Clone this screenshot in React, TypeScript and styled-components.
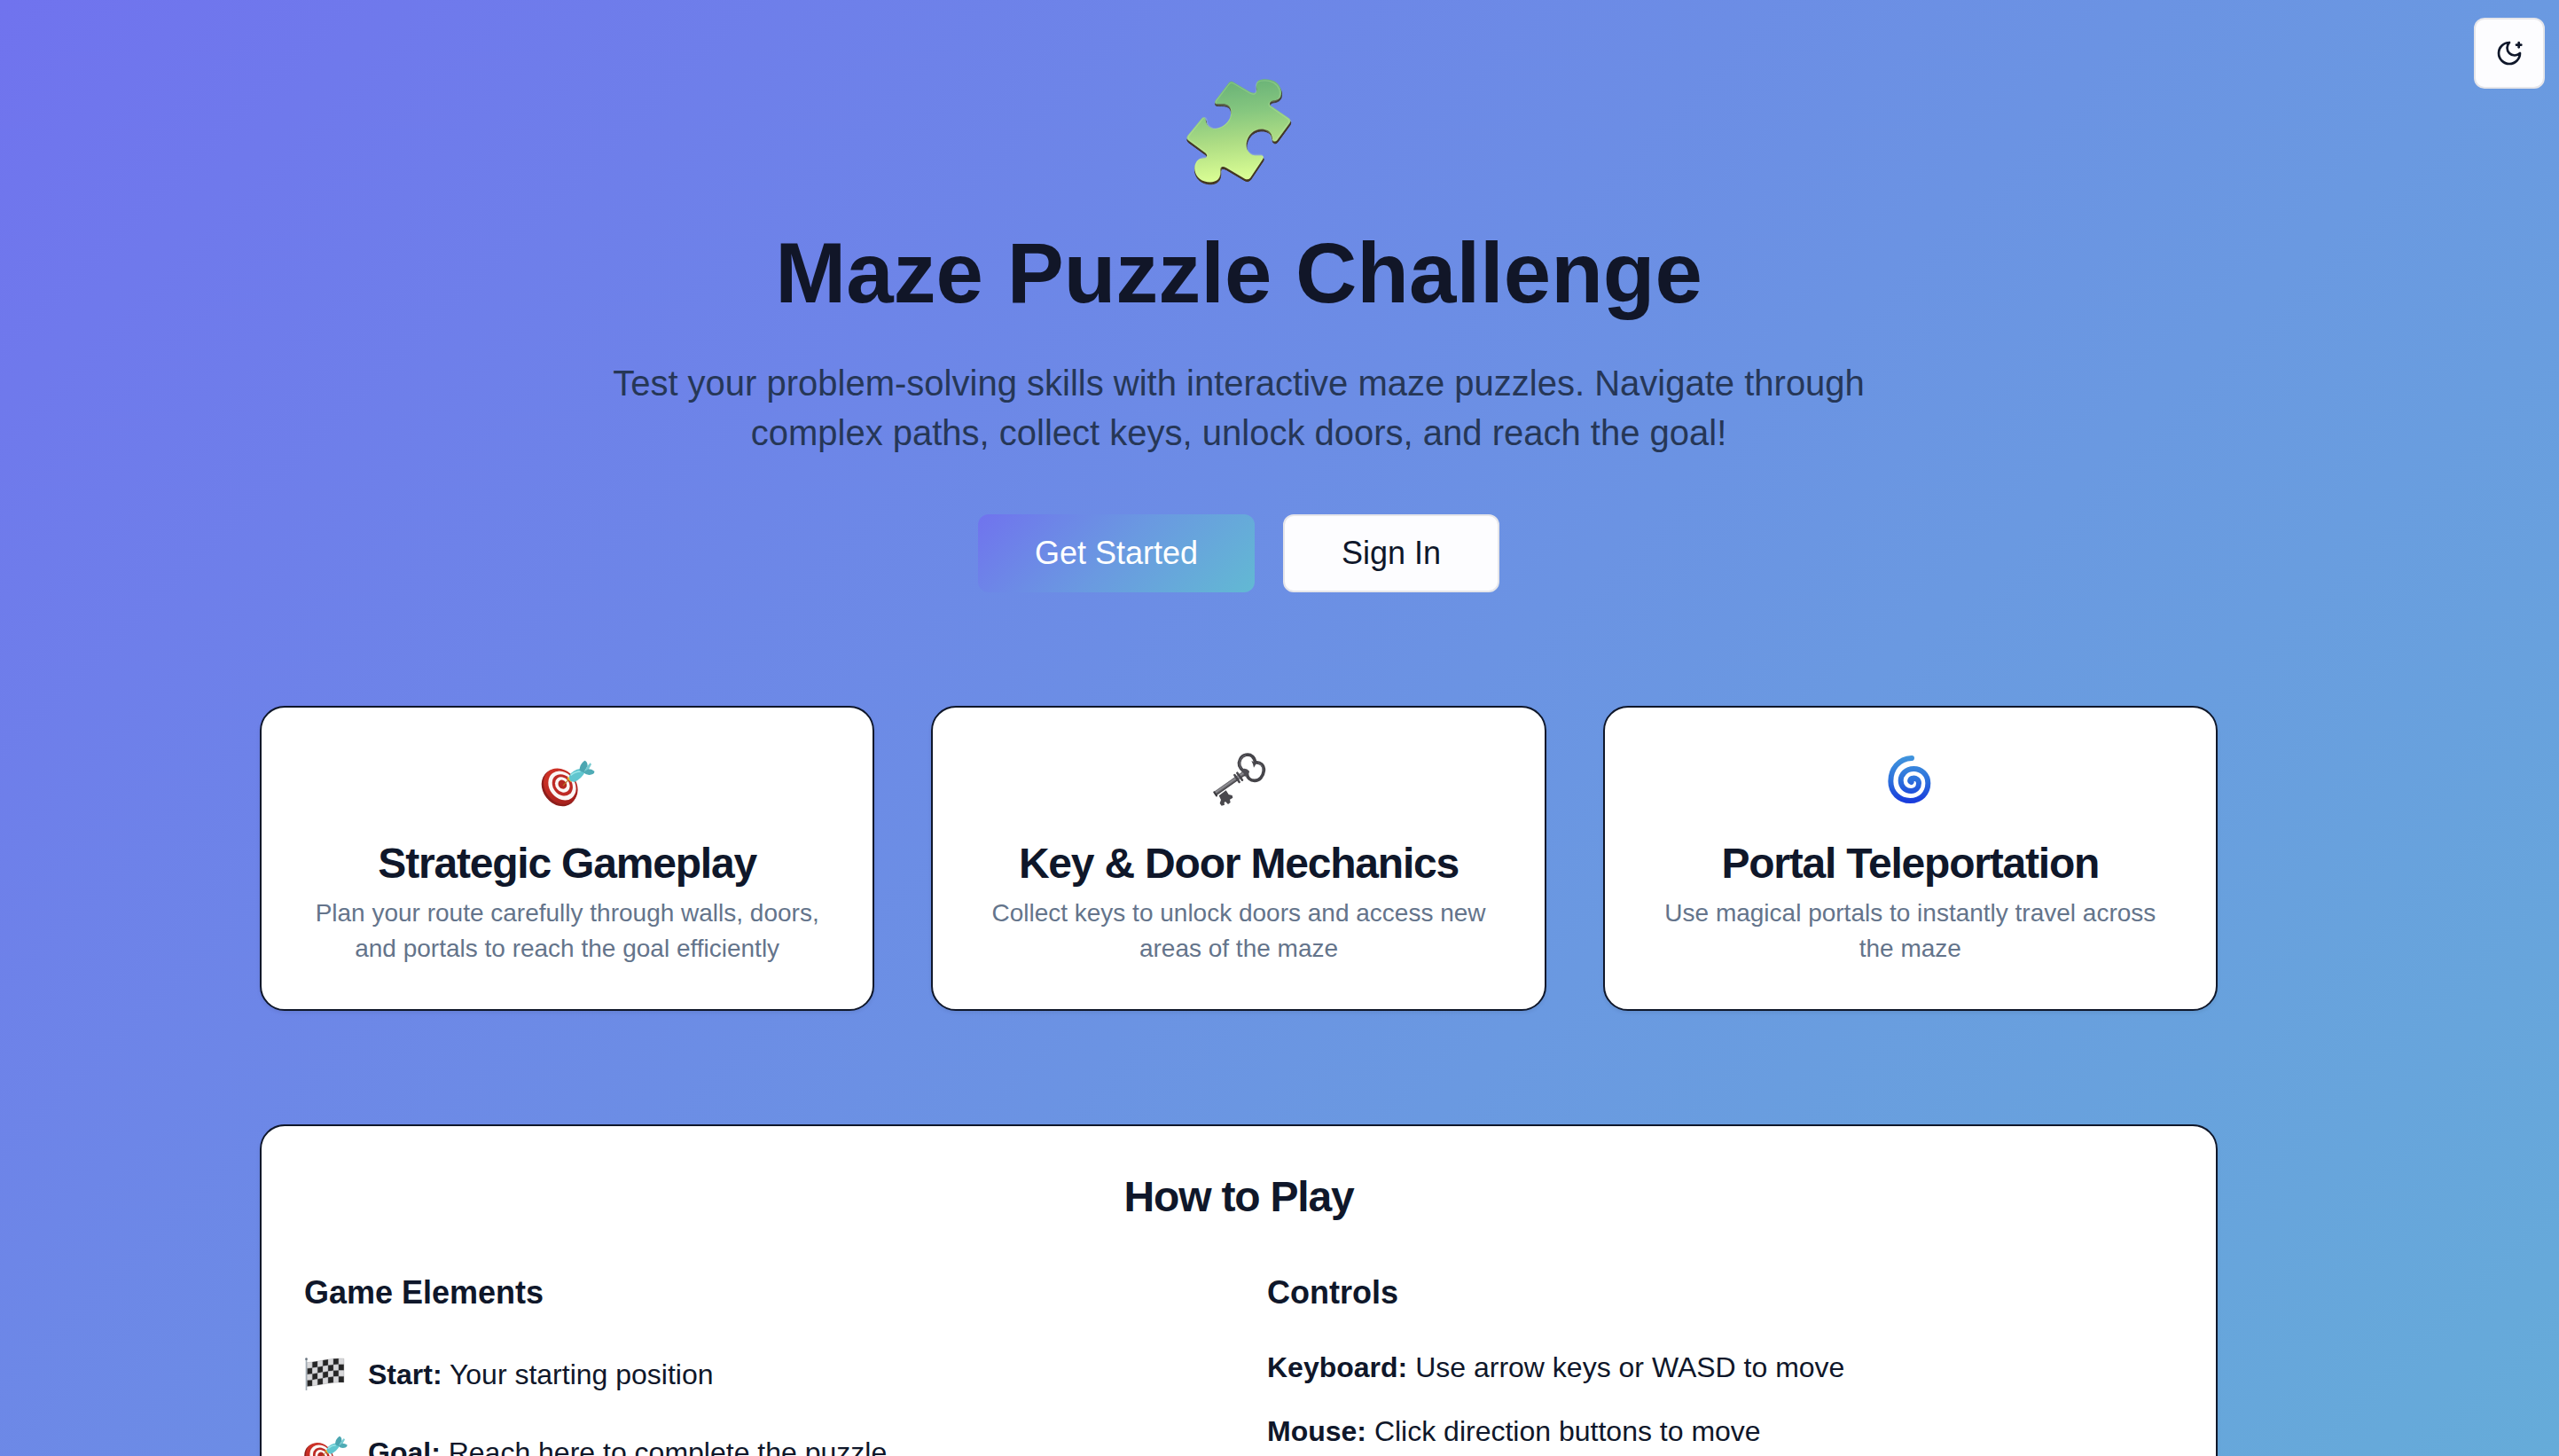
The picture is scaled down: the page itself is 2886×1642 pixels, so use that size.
import React from "react";
import styled, { createGlobalStyle } from "styled-components";

const INK = "#0f172a";

const GlobalStyle = createGlobalStyle`
  *, *::before, *::after { box-sizing: border-box; }
  html, body { margin: 0; padding: 0; height: 1642px; overflow: hidden; }
  body { font-family: "Liberation Sans", Arial, Helvetica, sans-serif; color: ${INK}; }
  h1, h2, h3, p, ul { margin: 0; padding: 0; }
`;

const Viewport = styled.div`
  height: 1642px;
  overflow: hidden;
  position: relative;
`;

const Page = styled.div`
  height: 2860px;
  padding-right: 92px;
  background: linear-gradient(135deg, #7073ee 0%, #6a99e1 50%, #62b9d3 100%);
`;

const ThemeToggle = styled.button`
  position: absolute;
  top: 20px;
  right: 16px;
  width: 80px;
  height: 80px;
  padding: 0;
  display: flex;
  align-items: center;
  justify-content: center;
  color: ${INK};
  background: #fdfdff;
  border: 2px solid #e6e6ea;
  border-radius: 12px;
`;

const Container = styled.main`
  width: 2208px;
  margin: 0 auto;
  padding-top: 84px;
  display: flex;
  flex-direction: column;
  gap: 128px;
`;

const Hero = styled.section`
  display: flex;
  flex-direction: column;
  align-items: center;
  text-align: center;
`;

const HeroArt = styled.div`
  height: 128px;
  margin-bottom: 48px;
`;

const HeroTitle = styled.h1`
  font-size: 96px;
  line-height: 96px;
  font-weight: 700;
  color: #111628;
  margin-bottom: 48px;
`;

const HeroText = styled.p`
  max-width: 1536px;
  font-size: 40px;
  line-height: 56px;
  color: #263757;
  margin-bottom: 64px;
`;

const Actions = styled.div`
  display: flex;
  gap: 32px;
`;

const Button = styled.button<{ $primary?: boolean }>`
  height: 88px;
  padding: 0 64px;
  font: 400 36px/56px "Liberation Sans", Arial, sans-serif;
  border-radius: 12px;
  white-space: nowrap;
  color: ${(p) => (p.$primary ? "#ffffff" : INK)};
  border: ${(p) => (p.$primary ? "0" : "2px solid #e6e6ea")};
  background: ${(p) => (p.$primary ? "linear-gradient(135deg, #7073ee 0%, #6a99e1 50%, #62b9d3 100%)" : "#fdfdff")};
`;

const Features = styled.section`
  display: grid;
  grid-template-columns: repeat(3, 1fr);
  gap: 64px;
`;

const Card = styled.article`
  background: #ffffff;
  border: 2px solid ${INK};
  border-radius: 28px;
  box-shadow: 0 2px 4px rgba(0, 0, 0, 0.08);
`;

const FeatureCard = styled(Card)`
  height: 344px;
  padding: 48px;
  display: flex;
  flex-direction: column;
  align-items: center;
  text-align: center;
`;

const FeatureIcon = styled.div`
  height: 80px;
  padding-top: 2px;
  margin-bottom: 24px;
`;

const FeatureTitle = styled.h3`
  font-size: 48px;
  line-height: 48px;
  font-weight: 700;
  letter-spacing: -1.2px;
  white-space: nowrap;
  margin-bottom: 12px;
`;

const FeatureText = styled.p`
  font-size: 28px;
  line-height: 40px;
  color: #64748b;
`;

const Guide = styled(Card)`
  height: 1000px;
  padding: 48px;
`;

const GuideTitle = styled.h2`
  font-size: 48px;
  line-height: 64px;
  font-weight: 700;
  letter-spacing: -1.2px;
  text-align: center;
  margin-bottom: 48px;
`;

const GuideColumns = styled.div`
  display: grid;
  grid-template-columns: 1fr 1fr;
  gap: 64px;
`;

const ColumnTitle = styled.h3`
  font-size: 36px;
  line-height: 56px;
  font-weight: 700;
  margin-bottom: 32px;
`;

const List = styled.ul`
  list-style: none;
  display: flex;
  flex-direction: column;
  gap: 24px;
`;

const Item = styled.li<{ $tall?: boolean }>`
  display: flex;
  align-items: center;
  gap: 24px;
  height: ${(p) => (p.$tall ? 64 : 48)}px;
  font-size: 32px;
  line-height: 48px;
`;

const ItemIcon = styled.span`
  width: 48px;
  display: flex;
  justify-content: center;
  svg { flex: none; }
`;

const MoonStar = () => (
  <svg width="32" height="32" viewBox="0 0 24 24" fill="none" stroke="currentColor" strokeWidth="2" strokeLinecap="round" strokeLinejoin="round">
    <path d="M12 3a6 6 0 0 0 9 9 9 9 0 1 1-9-9" />
    <path d="M20 3v4" />
    <path d="M22 5h-4" />
  </svg>
);

const PIECE =
  "M258 101 Q265 94 274 100 L330 133 Q352 143 352 124 C350 113 349 101 358 94 C370 87 398 88 413 97 C432 108 440 130 433 149 C427 160 413 162 404 163 C394 166 394 177 403 182 L461 222 Q470 229 464 238 L421 297 Q412 305 405 295 C404 276 398 263 376 259 C346 255 322 276 317 306 C314 328 326 345 345 348 L368 348 Q378 350 373 360 L330 424 Q322 432 312 427 L249 390 Q230 380 229 396 C230 408 229 419 222 428 C208 443 178 441 159 427 C141 412 137 388 147 371 C155 358 167 358 177 357 C188 352 184 343 175 337 L120 297 Q112 290 118 281 L165 223 Q173 214 179 224 C180 240 187 252 202 256 C225 261 251 244 261 222 C269 201 266 181 249 176 C240 172 225 175 215 173 Q207 170 213 160 Z";

const Puzzle = () => (
  <svg width="128" height="128" viewBox="99 72 384 384">
    <defs>
      <linearGradient id="piece" gradientUnits="userSpaceOnUse" x1="265" y1="95" x2="300" y2="430">
        <stop offset="0" stopColor="#69b277" />
        <stop offset="0.32" stopColor="#86c77f" />
        <stop offset="0.62" stopColor="#aedd84" />
        <stop offset="1" stopColor="#dcff94" />
      </linearGradient>
      <linearGradient id="pieceRim" gradientUnits="userSpaceOnUse" x1="200" y1="90" x2="240" y2="440">
        <stop offset="0" stopColor="#3d6350" />
        <stop offset="0.3" stopColor="#40352c" />
        <stop offset="1" stopColor="#43351f" />
      </linearGradient>
      <filter id="soft" x="-10%" y="-10%" width="120%" height="120%"><feGaussianBlur stdDeviation="2" /></filter>
    </defs>
    <path d={PIECE} fill="url(#pieceRim)" transform="translate(1 5)" stroke="url(#pieceRim)" strokeWidth="3" />
    <path d={PIECE} fill="url(#piece)" transform="translate(0 -2)" filter="url(#soft)" />
    <path d={PIECE} fill="none" stroke="#d4f7ae" strokeOpacity="0.22" strokeWidth="4" transform="translate(290 262) scale(0.97) translate(-290 -264)" filter="url(#soft)" />
  </svg>
);

const Target = ({ size, id }: { size: number; id: string }) => (
  <svg width={size} height={size} viewBox="53 24 192 192">
    <defs>
      <linearGradient id={id} x1="0" y1="0" x2="0" y2="1">
        <stop offset="0" stopColor="#cf3227" />
        <stop offset="1" stopColor="#a51f1c" />
      </linearGradient>
    </defs>
    <ellipse cx="121" cy="145" rx="55" ry="67" transform="rotate(-38 121 145)" fill="#8e1e1b" />
    <ellipse cx="126" cy="140" rx="53" ry="65" transform="rotate(-38 126 140)" fill={`url(#${id})`} />
    <ellipse cx="131" cy="138" rx="43" ry="53" transform="rotate(-38 131 138)" fill="#fbf7f5" />
    <ellipse cx="132" cy="136" rx="32" ry="39" transform="rotate(-38 132 136)" fill="#be2a24" />
    <ellipse cx="132" cy="135" rx="23" ry="28" transform="rotate(-38 132 135)" fill="#fbf7f5" />
    <ellipse cx="132" cy="134" rx="13.5" ry="16" transform="rotate(-38 132 134)" fill="#b62822" />
    <path d="M135 137 L152 119" stroke="#b97d24" strokeWidth="3.5" strokeLinecap="round" />
    <path d="M147 113 L155 109 L162 119 L161 127 Z" fill="#e5bd26" />
    <path d="M155 104 Q168 84 192 81 L208 92 Q198 113 172 126 L159 122 Q153 112 155 104 Z" fill="#60c6cf" />
    <path d="M160 103 Q175 90 193 90" stroke="#9de7e8" strokeWidth="5" fill="none" />
    <path d="M190 87 Q189 66 207 53 Q217 55 217 72 L204 94 Z" fill="#4ba6b1" />
    <path d="M204 94 L216 72 L226 61 L230 66 L220 85 Z" fill="#76cbd1" />
    <path d="M202 92 L220 82 Q231 82 240 89 Q241 97 232 100 Q215 106 202 92 Z" fill="#4fabb5" />
  </svg>
);

const Key = () => (
  <svg width="64" height="64" viewBox="45 54 192 192">
    <defs>
      <linearGradient id="steel" gradientUnits="userSpaceOnUse" x1="104" y1="155" x2="113" y2="168">
        <stop offset="0" stopColor="#4c4b50" />
        <stop offset="0.35" stopColor="#96959a" />
        <stop offset="1" stopColor="#343337" />
      </linearGradient>
    </defs>
    <path d="M158 119 C144 108 139 93 146 79 C154 62 176 59 187 69 C194 75 196 84 197 90 C214 87 227 99 226 117 C224 137 211 151 195 151 C180 151 170 142 169 127 Z" fill="none" stroke="#454449" strokeWidth="11" strokeLinejoin="round" />
    <path d="M149 110 C138 91 147 70 165 65 M207 91 C218 95 224 108 221 121" fill="none" stroke="#76757c" strokeWidth="2.5" />
    <path d="M152 112 Q166 106 177 119 Q176 131 164 137 L151 133 Z" fill="#4f4e54" />
    <path d="M184 84 Q191 97 192 107 L201 92 Z" fill="#48474c" />
    <path d="M74 202 L98 184 L107 198 L119 201 L121 209 L111 215 L113 225 L105 231 L96 222 L92 225 L93 233 L83 236 L77 228 L81 216 Z" fill="#49484d" />
    <path d="M60 196 L158 127" stroke="url(#steel)" strokeWidth="15" />
    <path d="M58 190 L66 202" stroke="#3a393e" strokeWidth="6" strokeLinecap="round" />
    <path d="M127 132 L143 156 M136 125 L153 149" stroke="#48474c" strokeWidth="7.5" strokeLinecap="round" />
    <path d="M135 132 L145 147" stroke="#96959b" strokeWidth="3" />
  </svg>
);

const Cyclone = () => (
  <svg width="64" height="64" viewBox="37 54 192 192">
    <defs>
      <linearGradient id="swirl" gradientUnits="userSpaceOnUse" x1="130" y1="66" x2="130" y2="229">
        <stop offset="0" stopColor="#4196dd" />
        <stop offset="0.5" stopColor="#2d72dc" />
        <stop offset="1" stopColor="#1737dc" />
      </linearGradient>
    </defs>
    <path d="M139 75 C94 77 68 112 68 153 C68 193 98 219 134 219 C170 219 194 193 194 160 C194 130 171 111 146 111 C120 111 102 130 102 151 C102 172 118 186 137 186 C154 186 163 173 163 160 C163 148 153 142 144 143 C134 144 130 152 138 156" fill="none" stroke="url(#swirl)" strokeWidth="18" strokeLinecap="round" />
  </svg>
);

const flagTop = (x: number) => 73 - 7 * Math.sin(((x - 98) / 125) * Math.PI);

const flagCells = Array.from({ length: 28 }, (_, i) => {
  const col = i % 7;
  const row = Math.floor(i / 7);
  const x0 = 49 + col * 17.8;
  const x1 = x0 + 17.8;
  const y = (x: number, r: number) => flagTop(x) + r * 20.2;
  return {
    points: `${x0},${y(x0, row)} ${x1},${y(x1, row)} ${x1},${y(x1, row + 1)} ${x0},${y(x0, row + 1)}`,
    dark: (col + row) % 2 === 1,
  };
});

const Flag = () => (
  <svg width="52" height="52" viewBox="33 42 156 156">
    {flagCells.map((c) => (
      <polygon key={c.points} points={c.points} fill={c.dark ? "#252525" : "#d8d8da"} stroke="#77777a" strokeWidth="0.8" />
    ))}
    <path d="M46.5 68 V174" stroke="#a3adb6" strokeWidth="5" />
    <circle cx="46.5" cy="68" r="4" fill="#66717c" />
  </svg>
);

const features = [
  { icon: <Target size={64} id="targetLarge" />, title: "Strategic Gameplay", text: "Plan your route carefully through walls, doors, and portals to reach the goal efficiently" },
  { icon: <Key />, title: "Key & Door Mechanics", text: "Collect keys to unlock doors and access new areas of the maze" },
  { icon: <Cyclone />, title: "Portal Teleportation", text: "Use magical portals to instantly travel across the maze" },
];

const elements = [
  { icon: <Flag />, name: "Start:", text: "Your starting position" },
  { icon: <Target size={52} id="targetSmall" />, name: "Goal:", text: "Reach here to complete the puzzle" },
];

const controls = [
  { name: "Keyboard:", text: "Use arrow keys or WASD to move" },
  { name: "Mouse:", text: "Click direction buttons to move" },
];

export default function App() {
  return (
    <Viewport>
      <GlobalStyle />
      <Page>
        <Container>
          <Hero>
            <HeroArt><Puzzle /></HeroArt>
            <HeroTitle>Maze Puzzle Challenge</HeroTitle>
            <HeroText>
              Test your problem-solving skills with interactive maze puzzles. Navigate through complex paths, collect keys, unlock doors, and reach the goal!
            </HeroText>
            <Actions>
              <Button $primary>Get Started</Button>
              <Button>Sign In</Button>
            </Actions>
          </Hero>
          <Features>
            {features.map((f) => (
              <FeatureCard key={f.title}>
                <FeatureIcon>{f.icon}</FeatureIcon>
                <FeatureTitle>{f.title}</FeatureTitle>
                <FeatureText>{f.text}</FeatureText>
              </FeatureCard>
            ))}
          </Features>
          <Guide>
            <GuideTitle>How to Play</GuideTitle>
            <GuideColumns>
              <div>
                <ColumnTitle>Game Elements</ColumnTitle>
                <List>
                  {elements.map((e) => (
                    <Item key={e.name} $tall>
                      <ItemIcon>{e.icon}</ItemIcon>
                      <span><strong>{e.name}</strong> {e.text}</span>
                    </Item>
                  ))}
                </List>
              </div>
              <div>
                <ColumnTitle>Controls</ColumnTitle>
                <List>
                  {controls.map((c) => (
                    <Item key={c.name}>
                      <span><strong>{c.name}</strong> {c.text}</span>
                    </Item>
                  ))}
                </List>
              </div>
            </GuideColumns>
          </Guide>
        </Container>
      </Page>
      <ThemeToggle aria-label="Toggle theme"><MoonStar /></ThemeToggle>
    </Viewport>
  );
}
